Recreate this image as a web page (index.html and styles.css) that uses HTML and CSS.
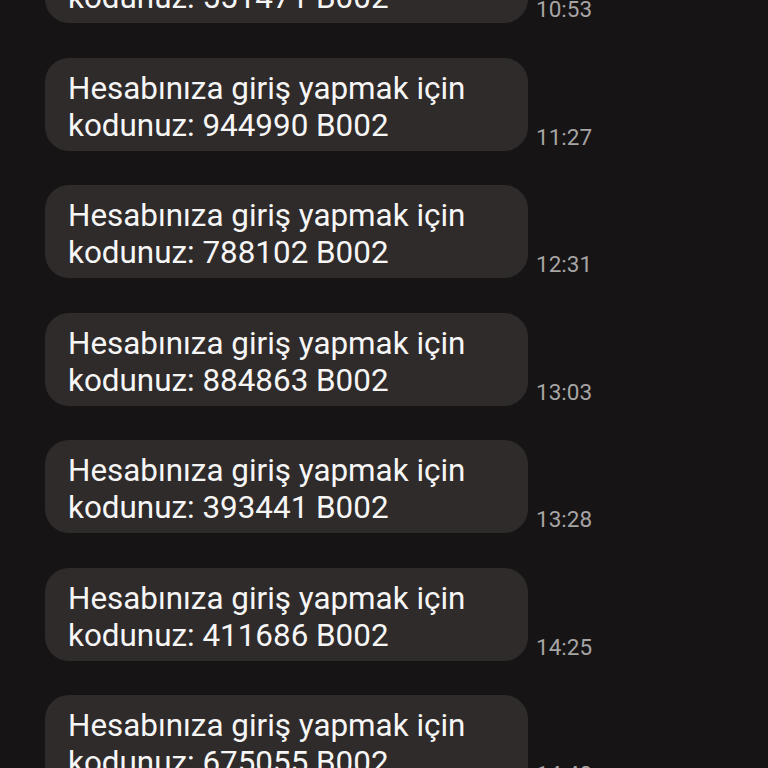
FILE: index.html
```html
<!DOCTYPE html>
<html lang="tr">
<head>
    <meta charset="UTF-8">
    <meta name="viewport" content="width=device-width, initial-scale=1.0">
    <title>Mesajlar</title>
    <link rel="stylesheet" href="styles.css">
</head>
<body>
    <div class="thread">
        <div class="msg">
            <div class="bubble">Hesabınıza giriş yapmak için<br>kodunuz: 551471 B002</div>
            <div class="time">10:53</div>
        </div>
        <div class="msg">
            <div class="bubble">Hesabınıza giriş yapmak için<br>kodunuz: 944990 B002</div>
            <div class="time">11:27</div>
        </div>
        <div class="msg">
            <div class="bubble">Hesabınıza giriş yapmak için<br>kodunuz: 788102 B002</div>
            <div class="time">12:31</div>
        </div>
        <div class="msg">
            <div class="bubble">Hesabınıza giriş yapmak için<br>kodunuz: 884863 B002</div>
            <div class="time">13:03</div>
        </div>
        <div class="msg">
            <div class="bubble">Hesabınıza giriş yapmak için<br>kodunuz: 393441 B002</div>
            <div class="time">13:28</div>
        </div>
        <div class="msg">
            <div class="bubble">Hesabınıza giriş yapmak için<br>kodunuz: 411686 B002</div>
            <div class="time">14:25</div>
        </div>
        <div class="msg">
            <div class="bubble">Hesabınıza giriş yapmak için<br>kodunuz: 675055 B002</div>
            <div class="time">14:40</div>
        </div>
    </div>
</body>
</html>
```

FILE: styles.css
```css
html, body {
    margin: 0;
    height: 100%;
    overflow: hidden;
    background-color: #161414;
}

body {
    font-family: Roboto, "Liberation Sans", sans-serif;
}

.thread {
    display: flex;
    flex-direction: column;
    gap: 34.5px;
    margin-top: -70px;
    padding-left: 45px;
}

.msg {
    display: flex;
    align-items: flex-end;
}

.bubble {
    box-sizing: border-box;
    width: 483px;
    height: 93px;
    padding: 12px 23px 0;
    border-radius: 24px;
    background-color: #2f2b2b;
    color: #f7f6f6;
    font-size: 31.4px;
    line-height: 37px;
}

.time {
    margin-left: 8px;
    margin-bottom: 1px;
    color: #a6a4a4;
    font-size: 22.5px;
}
```
